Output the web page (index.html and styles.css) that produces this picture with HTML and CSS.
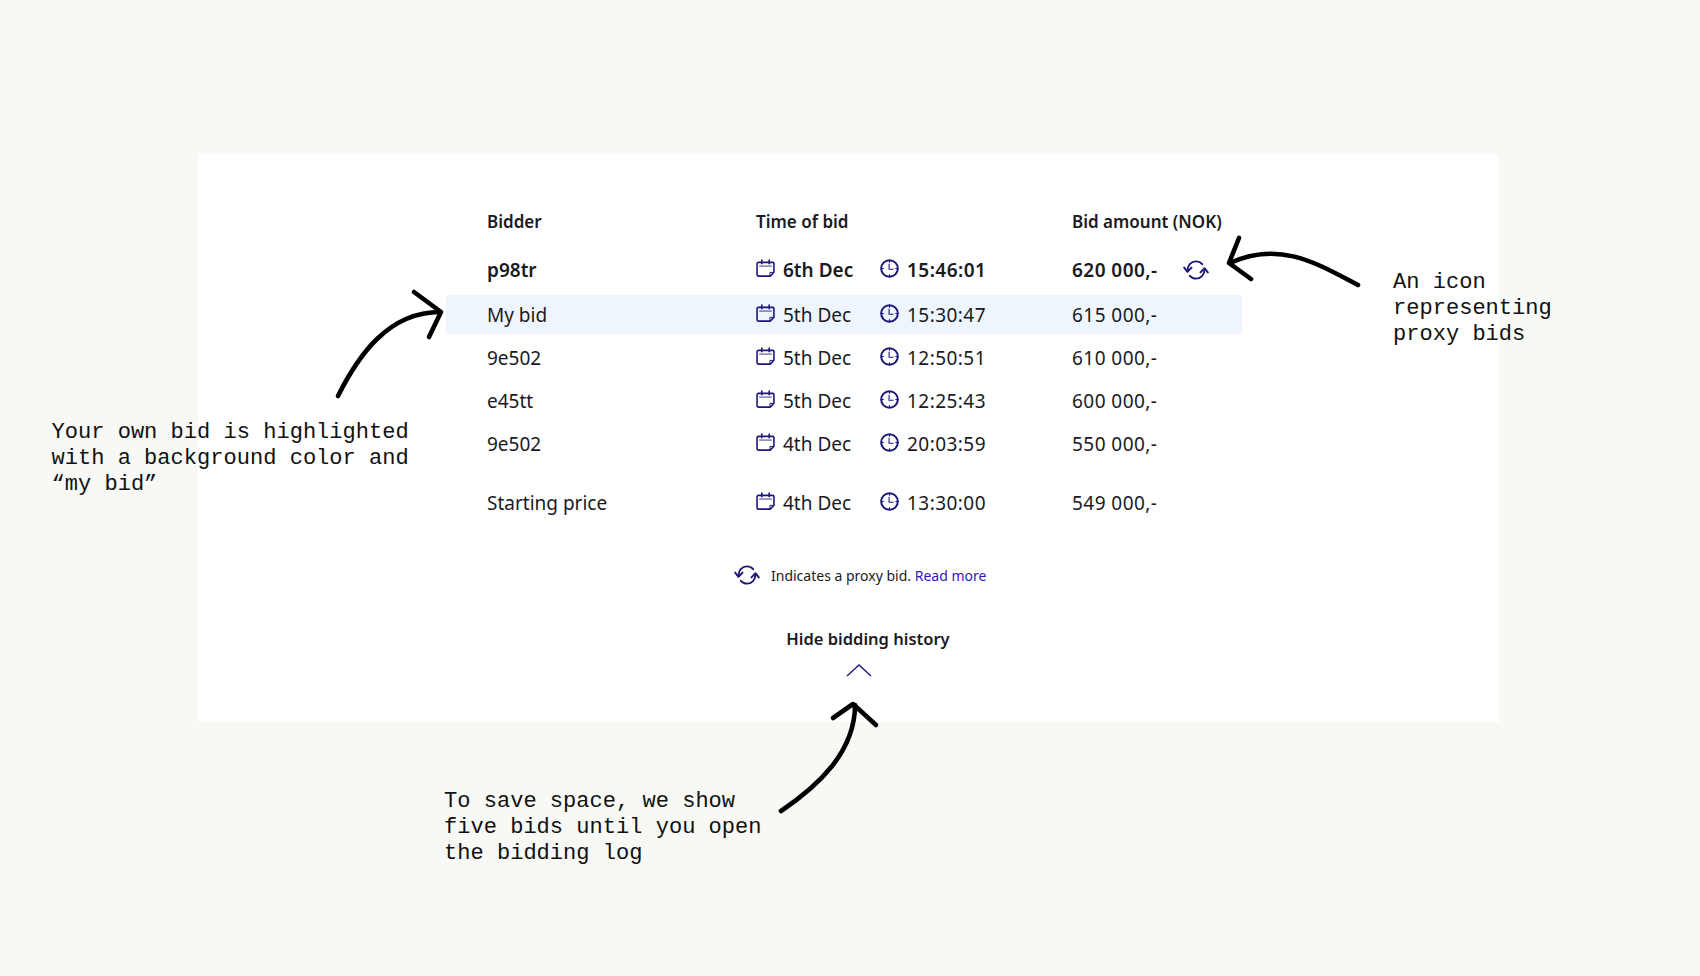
FILE: index.html
```html
<!DOCTYPE html>
<html lang="en">
<head>
<meta charset="utf-8">
<title>Bidding history</title>
<link rel="stylesheet" href="styles.css">
</head>
<body>
<svg width="0" height="0" class="defs">
  <defs>
    <symbol id="cal" viewBox="0 0 18 18">
      <path d="M2.200 3.200H15.800C16.500 3.200 17 3.700 17 4.400V12.500L13.500 16.200H2.200C1.500 16.200 1 15.700 1 15V4.400C1 3.700 1.500 3.200 2.200 3.200Z" fill="none" stroke="currentColor" stroke-width="1.500" stroke-linejoin="round"/>
      <path d="M5.500 1V4.500M12.500 1V4.500" fill="none" stroke="currentColor" stroke-width="1.500" stroke-linecap="round"/>
      <path d="M3 6.700H15" fill="none" stroke="currentColor" stroke-width=".8"/>
      <path d="M13.200 16V12.700H16.800" fill="none" stroke="currentColor" stroke-width=".9"/>
    </symbol>
    <symbol id="clk" viewBox="0 0 18 18">
      <circle cx="9" cy="9" r="7.900" fill="none" stroke="currentColor" stroke-width="1.900"/>
      <path d="M8.600 4.500V9.700H12.800" fill="none" stroke="currentColor" stroke-width="1"/>
      <path d="M9 1.500V3.500M9 14.500V16.500M1.500 9H3.500M14.500 9H16.500" fill="none" stroke="currentColor" stroke-width="1"/>
    </symbol>
    <symbol id="proxy" viewBox="0 0 26 20">
      <g fill="none" stroke="currentColor" stroke-width="1.900" stroke-linecap="round" stroke-linejoin="round">
        <path d="M19.200 4.200C17.700 2.500 15.500 1.400 13 1.400C8.300 1.400 4.500 5.200 4.500 10.500"/>
        <path d="M1.200 7.600L4.500 11.800L8.500 7.600"/>
        <path d="M6.800 15.800C8.300 17.500 10.500 18.600 13 18.600C17.700 18.600 21.500 14.800 21.500 9.500"/>
        <path d="M17.500 12.400L21.500 8.200L24.800 12.400"/>
      </g>
    </symbol>
  </defs>
</svg>

<main class="page">
  <section class="card">
    <div class="row head">
      <span>Bidder</span><span>Time of bid</span><span></span><span>Bid amount (NOK)</span>
    </div>
    <div class="row lead">
      <span>p98tr</span>
      <span class="cell"><svg class="ico"><use href="#cal"/></svg>6th Dec</span>
      <span class="cell num"><svg class="ico"><use href="#clk"/></svg>15:46:01</span>
      <span class="cell num">620 000,-<svg class="proxy"><use href="#proxy"/></svg></span>
    </div>
    <div class="row mine">
      <span>My bid</span>
      <span class="cell"><svg class="ico"><use href="#cal"/></svg>5th Dec</span>
      <span class="cell num"><svg class="ico"><use href="#clk"/></svg>15:30:47</span>
      <span class="cell num">615 000,-</span>
    </div>
    <div class="row">
      <span>9e502</span>
      <span class="cell"><svg class="ico"><use href="#cal"/></svg>5th Dec</span>
      <span class="cell num"><svg class="ico"><use href="#clk"/></svg>12:50:51</span>
      <span class="cell num">610 000,-</span>
    </div>
    <div class="row">
      <span>e45tt</span>
      <span class="cell"><svg class="ico"><use href="#cal"/></svg>5th Dec</span>
      <span class="cell num"><svg class="ico"><use href="#clk"/></svg>12:25:43</span>
      <span class="cell num">600 000,-</span>
    </div>
    <div class="row">
      <span>9e502</span>
      <span class="cell"><svg class="ico"><use href="#cal"/></svg>4th Dec</span>
      <span class="cell num"><svg class="ico"><use href="#clk"/></svg>20:03:59</span>
      <span class="cell num">550 000,-</span>
    </div>
    <div class="row start">
      <span>Starting price</span>
      <span class="cell"><svg class="ico"><use href="#cal"/></svg>4th Dec</span>
      <span class="cell num"><svg class="ico"><use href="#clk"/></svg>13:30:00</span>
      <span class="cell num">549 000,-</span>
    </div>
    <p class="note"><svg class="proxy note-ico"><use href="#proxy"/></svg>Indicates a proxy bid.&nbsp;<a href="#">Read more</a></p>
    <div class="toggle">
      <span>Hide bidding history</span>
      <svg class="chev" viewBox="0 0 26 14"><path d="M1 13L13 2L25 13" fill="none" stroke="currentColor" stroke-width="1.300"/></svg>
    </div>
  </section>

  <p class="ann ann-left">Your own bid is highlighted<br>with a background color and<br>“my bid”</p>
  <p class="ann ann-right">An icon<br>representing<br>proxy bids</p>
  <p class="ann ann-bottom">To save space, we show<br>five bids until you open<br>the bidding log</p>

  <svg class="arrows" viewBox="0 0 1700 976">
    <g fill="none" stroke="#000" stroke-width="4.600" stroke-linecap="round" stroke-linejoin="round">
      <path d="M338 396C358 356 388 312 440 312"/>
      <path d="M414 292L441 312L429 337"/>
      <path d="M1358 285C1318 264 1280 240 1230 263"/>
      <path d="M1239 238L1229 263L1251 279"/>
      <path d="M781 811C818 786 855 752 855 705"/>
      <path d="M833 718L853 704L876 725"/>
    </g>
  </svg>
</main>
</body>
</html>
```
FILE: styles.css
```css
* { box-sizing: border-box; }
html, body { margin: 0; padding: 0; }
body {
  background: #f8f8f4;
  font-family: "Noto Sans", sans-serif;
  color: #1a1a1f;
}
.defs { position: absolute; }
.page {
  position: relative;
  width: 1700px;
  height: 976px;
  padding: 154px 0 0 198px;
  overflow: hidden;
}
.card {
  width: 1301px;
  height: 568px;
  background: #fff;
  padding-top: 48px;
}
.row {
  display: grid;
  grid-template-columns: 269px 124px 192px 1fr;
  align-items: center;
  width: 796px;
  height: 39px;
  margin: 0 0 4px 248px;
  padding: 0 0 0 41px;
  font-size: 19px;
}
.head {
  height: 39px;
  margin-bottom: 9px;
  font-size: 17px;
  font-weight: 600;
}
.lead { font-weight: 600; margin-bottom: 6px; }
.mine { background: #eef5fd; }
.start { margin-top: 20px; }
.cell { display: flex; align-items: center; }
.num { letter-spacing: .45px; }
.ico {
  width: 19px;
  height: 19px;
  margin: 0 8px 2px 0;
  color: #1c1677;
  flex: none;
}
.proxy {
  width: 26px;
  height: 20px;
  margin-left: 25px;
  color: #1c1677;
  flex: none;
}
.note {
  display: flex;
  align-items: center;
  margin: 38px 0 0 536px;
  height: 30px;
  font-size: 14px;
}
.note-ico { margin: 0 11px 0 0; }
.note a { color: #3217b8; text-decoration: none; }
.toggle {
  display: flex;
  flex-direction: column;
  align-items: center;
  width: 1340px;
  margin-top: 37px;
  font-size: 16.500px;
  font-weight: 600;
}
.chev {
  width: 26px;
  height: 14px;
  margin-top: 13px;
  margin-left: -18px;
  color: #1c1677;
}
.ann {
  position: absolute;
  margin: 0;
  font-family: "Liberation Mono", monospace;
  font-size: 22.050px;
  line-height: 26px;
  color: #111;
}
.ann-left { left: 51.500px; top: 420px; }
.ann-right { left: 1393px; top: 270px; }
.ann-bottom { left: 444px; top: 789px; }
.arrows {
  position: absolute;
  left: 0;
  top: 0;
  width: 1700px;
  height: 976px;
  pointer-events: none;
}
```
